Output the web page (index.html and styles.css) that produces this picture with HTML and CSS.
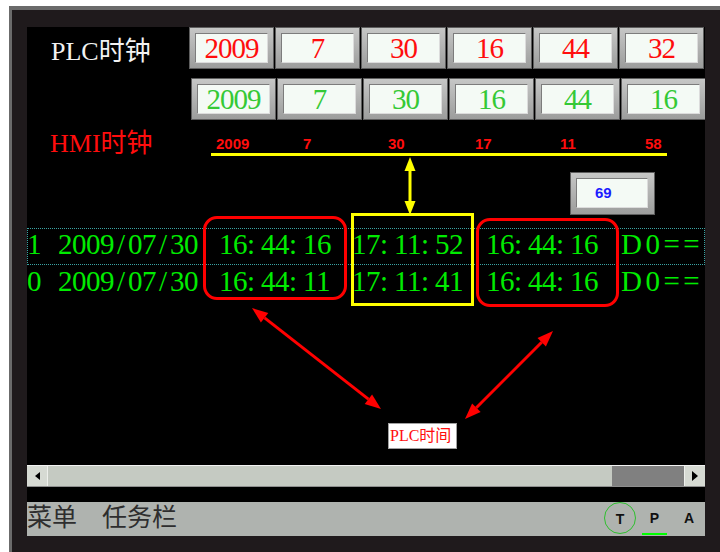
FILE: index.html
```html
<!DOCTYPE html>
<html lang="zh">
<head>
<meta charset="utf-8">
<title>PLC / HMI 时钟</title>
<link rel="stylesheet" href="styles.css">
</head>
<body>
<div class="frame">
  <div class="screen">
    <div class="clock-row">
      <div class="clock-label">PLC时钟</div>
      <div class="field"><div class="field-in red">2009</div></div>
      <div class="field"><div class="field-in red">7</div></div>
      <div class="field"><div class="field-in red">30</div></div>
      <div class="field"><div class="field-in red">16</div></div>
      <div class="field"><div class="field-in red">44</div></div>
      <div class="field"><div class="field-in red">32</div></div>
    </div>
    <div class="clock-row second">
      <div class="field"><div class="field-in green">2009</div></div>
      <div class="field"><div class="field-in green">7</div></div>
      <div class="field"><div class="field-in green">30</div></div>
      <div class="field"><div class="field-in green">16</div></div>
      <div class="field"><div class="field-in green">44</div></div>
      <div class="field"><div class="field-in green">16</div></div>
    </div>
    <div class="hmi">
      <div class="hmi-label">HMI时钟</div>
      <div class="scale">
        <div class="scale-nums">
          <span class="w87">2009</span><span class="w85">7</span><span class="w87">30</span><span class="w85">17</span><span class="w85">11</span><span>58</span>
        </div>
        <div class="scale-line"></div>
      </div>
    </div>
    <div class="counter-row">
      <div class="field counter"><div class="field-in blue">69</div></div>
    </div>
    <div class="log">
      <div class="log-row selected">
        <span class="c-idx">1</span><span class="c-date">2009<i>/</i>07<i>/</i>30</span><span class="c-t1">16<i>:</i>44<i>:</i>16</span><span class="c-t2">17<i>:</i>11<i>:</i>52</span><span class="c-t3">16<i>:</i>44<i>:</i>16</span><span class="c-rest">D0==1</span>
      </div>
      <div class="log-row">
        <span class="c-idx">0</span><span class="c-date">2009<i>/</i>07<i>/</i>30</span><span class="c-t1">16<i>:</i>44<i>:</i>11</span><span class="c-t2">17<i>:</i>11<i>:</i>41</span><span class="c-t3">16<i>:</i>44<i>:</i>16</span><span class="c-rest">D0==1</span>
      </div>
    </div>
    <div class="spacer"></div>
    <div class="scrollbar">
      <div class="sb-btn left"><span class="tri-left"></span></div>
      <div class="sb-track"></div>
      <div class="sb-thumb"></div>
      <div class="sb-btn right"><span class="tri-right"></span></div>
    </div>
    <div class="taskbar">
      <span class="tb-text">菜单</span>
      <span class="tb-text second">任务栏</span>
      <div class="tb-right">
        <span class="tb-circle">T</span>
        <span class="tb-p">P</span>
        <span class="tb-a">A</span>
      </div>
    </div>

    <div class="mark yellow-box"></div>
    <div class="mark red-box box-a"></div>
    <div class="mark red-box box-b"></div>
    <svg class="arrows" width="678" height="509" viewBox="0 0 678 509">
      <g fill="#ffff00" stroke="none">
        <rect x="381.5" y="143" width="3" height="32"/>
        <polygon points="383,130 377.5,144 388.5,144"/>
        <polygon points="383,188 377.5,174 388.5,174"/>
      </g>
      <g fill="#ff0000" stroke="none">
        <polygon points="225,281 233.9,295.6 241.3,286.1"/>
        <polygon points="354,382 337.7,376.9 345.1,367.4"/>
        <polygon points="526,304 518.9,319.6 510.5,311.1"/>
        <polygon points="438,392 453.6,384.9 445.1,376.5"/>
      </g>
      <g stroke="#ff0000" stroke-width="3" fill="none">
        <line x1="237.6" y1="290.9" x2="341.4" y2="372.1"/>
        <line x1="514.7" y1="315.3" x2="449.3" y2="380.7"/>
      </g>
    </svg>
    <div class="tag">PLC时间</div>
  </div>
</div>
</body>
</html>
```
FILE: styles.css
```css
html, body {
  margin: 0;
  padding: 0;
  background: #ffffff;
  overflow: hidden;
}

.frame {
  margin: 6px 0 0 9px;
  width: 711px;
  height: 546px;
  box-sizing: border-box;
  border-left: 3px solid #6b6b6b;
  border-top: 4px solid #6b6b6b;
  background: #1f1a1c;
  padding: 17px 15px 16px 15px;
}

.screen {
  position: relative;
  width: 678px;
  height: 509px;
  background: #000000;
  overflow: hidden;
  display: flex;
  flex-direction: column;
  font-family: "Liberation Serif", "Noto Sans CJK SC", serif;
}

/* clock rows */
.clock-row {
  display: flex;
  align-items: flex-start;
  height: 42px;
  flex: none;
}

.clock-row.second {
  margin-top: 9px;
  padding-left: 164px;
}

.clock-label {
  width: 164px;
  box-sizing: border-box;
  padding-left: 24px;
  margin-top: 10px;
  font-size: 26px;
  line-height: 30px;
  color: #f2f2f2;
  white-space: nowrap;
}

.field {
  flex: none;
  width: 85px;
  height: 42px;
  margin-right: 1px;
  box-sizing: border-box;
  border: 1px solid #5e5e5e;
  background: linear-gradient(#c6c7c6, #9c9d9c);
  padding: 5px;
}

.field-in {
  height: 30px;
  box-sizing: border-box;
  border: 1px solid;
  border-color: #7c7c7c #dcdcdc #dcdcdc #7c7c7c;
  background: #f4faf5;
  text-align: center;
  font-family: "Liberation Serif", serif;
  font-size: 29px;
  line-height: 28px;
  letter-spacing: -1px;
}

.red { color: #ff0d0d; }
.green { color: #35c935; }
.blue {
  color: #1c1cff;
  font-family: "Liberation Sans", sans-serif;
  font-weight: bold;
  font-size: 15px;
  letter-spacing: 0;
  text-align: left;
  padding-left: 18px;
}

/* HMI clock */
.hmi {
  display: flex;
  align-items: flex-start;
  height: 52px;
  flex: none;
}

.hmi-label {
  width: 184px;
  box-sizing: border-box;
  padding-left: 23px;
  margin-top: 9px;
  font-size: 26px;
  line-height: 30px;
  color: #ff0d0d;
  white-space: nowrap;
}

.scale {
  margin-top: 16px;
  width: 456px;
}

.scale-nums {
  display: flex;
  padding-left: 5px;
  height: 15px;
  font-family: "Liberation Sans", sans-serif;
  font-weight: bold;
  font-size: 15px;
  line-height: 15px;
  color: #ff0d0d;
}

.scale-nums .w87 { width: 87px; flex: none; }
.scale-nums .w85 { width: 85px; flex: none; }

.scale-line {
  margin-top: 2px;
  height: 3px;
  background: #ffff00;
}

/* counter */
.counter-row {
  height: 43px;
  flex: none;
  padding-left: 543px;
}

.field.counter {
  height: 43px;
  padding: 5px 6px 6px 5px;
}

/* log rows */
.log {
  margin-top: 13px;
  flex: none;
}

.log-row {
  display: flex;
  height: 37px;
  font-family: "Liberation Serif", serif;
  font-size: 29px;
  line-height: 32px;
  letter-spacing: -0.5px;
  color: #00ec00;
  white-space: nowrap;
  overflow: hidden;
}

.log-row.selected {
  outline: 1px dotted #3aa3a3;
  outline-offset: -1px;
}

.log-row span { flex: none; }
.log-row i {
  font-style: normal;
  display: inline-block;
  width: 14px;
  letter-spacing: 0;
}
.c-date i { text-align: center; }
.c-idx { width: 31px; }
.c-date { width: 161px; }
.c-t1 { width: 133px; }
.c-t2 { width: 134px; }
.c-t3 { width: 135px; }
.c-rest { letter-spacing: 3.5px; }

.spacer { flex: 1; }

/* scrollbar */
.scrollbar {
  flex: none;
  display: flex;
  height: 22px;
  margin-bottom: 15px;
  box-sizing: border-box;
  border-top: 1px solid #f2f2f2;
  border-bottom: 1px solid #8e8e8e;
  background: #c5cac2;
}

.sb-btn {
  width: 21px;
  flex: none;
  display: flex;
  align-items: center;
  justify-content: center;
  background: #d6dad3;
  box-sizing: border-box;
}

.sb-btn.left { border-right: 1px solid #eef0ec; }
.sb-btn.right { border-left: 1px solid #eef0ec; }

.tri-left {
  width: 0;
  height: 0;
  border-right: 5px solid #000;
  border-top: 4px solid transparent;
  border-bottom: 4px solid transparent;
}

.tri-right {
  width: 0;
  height: 0;
  border-left: 6px solid #000;
  border-top: 5px solid transparent;
  border-bottom: 5px solid transparent;
}

.sb-track { flex: 1; }
.sb-thumb {
  width: 72px;
  flex: none;
  background: #808080;
}

/* taskbar */
.taskbar {
  flex: none;
  height: 34px;
  display: flex;
  align-items: flex-start;
  background: #afb3af;
}

.tb-text {
  font-family: "Noto Sans CJK SC", sans-serif;
  font-size: 25px;
  line-height: 26px;
  color: #2e2e2e;
}

.tb-text.second { margin-left: 25px; }

.tb-right {
  margin-left: auto;
  display: flex;
  align-items: flex-start;
  padding-right: 4px;
  font-family: "Liberation Sans", sans-serif;
  font-weight: bold;
  font-size: 14px;
  color: #111;
}

.tb-circle {
  width: 32px;
  height: 32px;
  box-sizing: border-box;
  border: 1px solid #2ec02e;
  border-radius: 50%;
  display: flex;
  align-items: center;
  justify-content: center;
  padding-top: 1px;
}

.tb-p {
  width: 25px;
  height: 33px;
  margin-left: 6px;
  box-sizing: border-box;
  border-bottom: 2px solid #00ff00;
  text-align: center;
  line-height: 33px;
}

.tb-a {
  width: 24px;
  height: 33px;
  margin-left: 10px;
  text-align: center;
  line-height: 33px;
}

/* overlays */
.mark {
  position: absolute;
  box-sizing: border-box;
}

.yellow-box {
  left: 324px;
  top: 186px;
  width: 123px;
  height: 93px;
  border: 3px solid #ffff00;
}

.red-box {
  border: 3px solid #ff0000;
  border-radius: 14px;
}

.box-a {
  left: 176px;
  top: 189px;
  width: 144px;
  height: 84px;
}

.box-b {
  left: 449px;
  top: 191px;
  width: 143px;
  height: 89px;
}

.arrows {
  position: absolute;
  left: 0;
  top: 0;
  pointer-events: none;
}

.tag {
  position: absolute;
  left: 361px;
  top: 396px;
  width: 69px;
  height: 26px;
  box-sizing: border-box;
  border: 1px solid #a0a0a0;
  background: #ffffff;
  color: #ff0d0d;
  font-size: 16px;
  line-height: 24px;
  padding-left: 1px;
  white-space: nowrap;
}
```
